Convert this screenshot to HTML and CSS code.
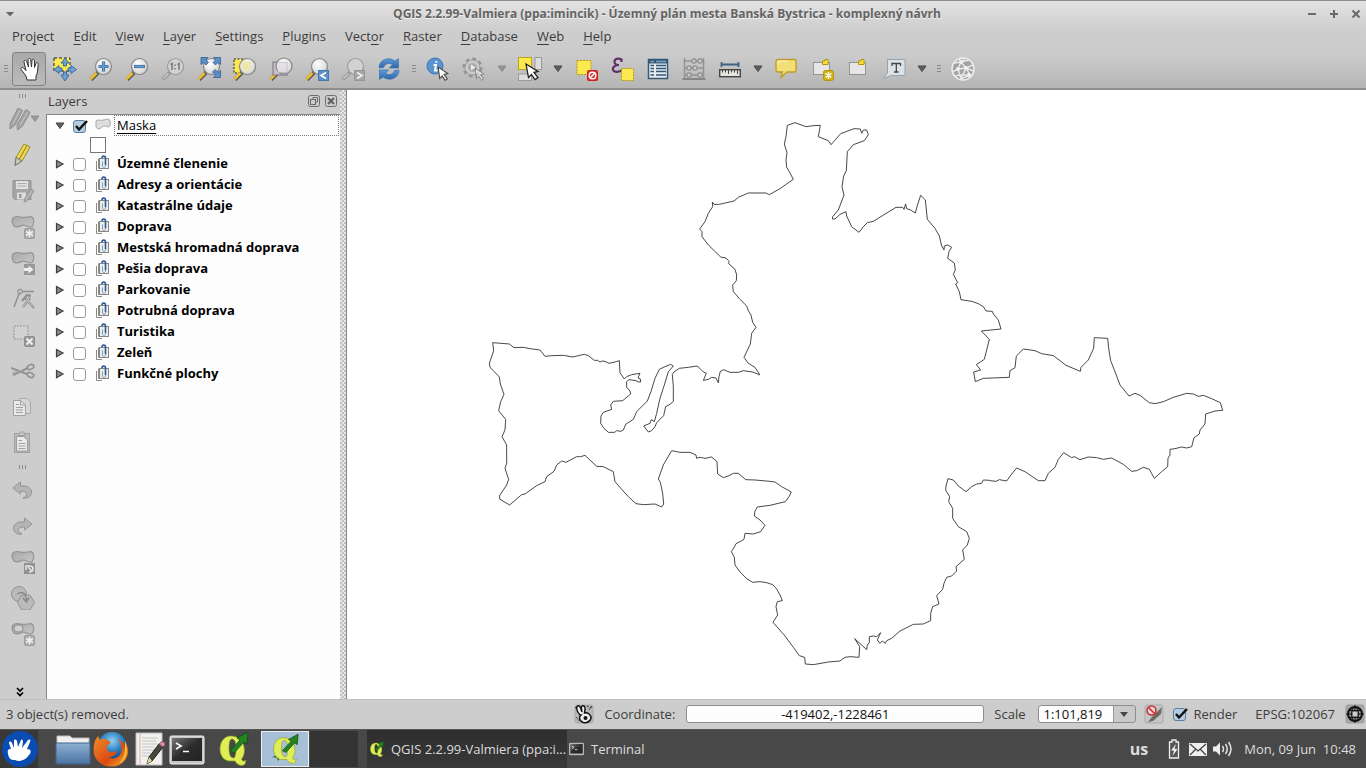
FILE: index.html
```html
<!DOCTYPE html>
<html lang="en">
<head>
<meta charset="utf-8">
<title>QGIS 2.2.99-Valmiera (ppa:imincik) - Územný plán mesta Banská Bystrica - komplexný návrh</title>
<link rel="stylesheet" href="styles.css">
</head>
<body>
<svg class="defs" aria-hidden="true">
  <defs>
    <linearGradient id="g-blue" x1="0" y1="0" x2="0" y2="1"><stop offset="0" stop-color="#5f9bd8"/><stop offset="1" stop-color="#2f66a8"/></linearGradient>
    <linearGradient id="g-grey" x1="0" y1="0" x2="1" y2="1"><stop offset="0" stop-color="#a8a8a8"/><stop offset="1" stop-color="#c6c6c6"/></linearGradient>
    <radialGradient id="g-lens" cx=".4" cy=".35" r=".7"><stop offset="0" stop-color="#fff"/><stop offset="1" stop-color="#cfd1d0"/></radialGradient>
    <linearGradient id="g-folder" x1="0" y1="0" x2="0" y2="1"><stop offset="0" stop-color="#8fb0d2"/><stop offset="1" stop-color="#4a72a2"/></linearGradient>
    <linearGradient id="g-term" x1="0" y1="0" x2="1" y2="1"><stop offset="0" stop-color="#777"/><stop offset=".5" stop-color="#2c2c2c"/><stop offset="1" stop-color="#222"/></linearGradient>
    <radialGradient id="g-globe" cx=".5" cy=".3" r=".7"><stop offset="0" stop-color="#8fd0f4"/><stop offset=".5" stop-color="#2c7fc0"/><stop offset="1" stop-color="#0c3570"/></radialGradient>
    <linearGradient id="g-fox" x1="0" y1="0" x2="1" y2="1"><stop offset="0" stop-color="#f08c2a"/><stop offset=".6" stop-color="#dc4a12"/><stop offset="1" stop-color="#f8b830"/></linearGradient>
  </defs>
  <symbol id="lens" viewBox="0 0 24 24">
    <path d="M2 22.500L9 15.500" stroke="#555" stroke-width="4"/><path d="M1.500 22L7.500 16" stroke="#f2c132" stroke-width="2.600"/>
    <circle cx="14.500" cy="9.500" r="8" fill="url(#g-lens)" stroke="#858585" stroke-width="1.200"/>
  </symbol>
  <symbol id="lens-grey" viewBox="0 0 24 24">
    <path d="M1.500 22.500L9 15.500" stroke="#959595" stroke-width="3.600"/><path d="M2 22L7.500 16.700" stroke="#c6c6c6" stroke-width="1.600"/>
    <circle cx="14.500" cy="9.500" r="8" fill="#d2d2d2" stroke="#9a9a9a" stroke-width="1.200"/>
  </symbol>
  <symbol id="cursor" viewBox="0 0 12 14"><path d="M1 1L10 7L6.500 7.800L9.500 12L7.500 13.400L4.800 9.200L2.500 11.800Z" fill="#fff" stroke="#444" stroke-width="1"/></symbol>
  <symbol id="blob" viewBox="0 0 24 14"><path d="M2 3C5 0 9 2 12 2.500C16 2.500 19 1 21 2C24 4 22.500 10 21 11.500C18 13.500 15 10 12 10C9 11 6 13.500 3 11C1 9 .5 5 2 3Z" fill="url(#g-grey)" stroke="#929292" stroke-width="1.200"/></symbol>
  <symbol id="star" viewBox="0 0 11 11"><rect x=".5" y=".5" width="10" height="10" rx="1.500" fill="#adadad" stroke="#9b9b9b"/><path d="M5.500 1.500V9.500M2 3.500L9 7.500M9 3.500L2 7.500" stroke="#f0f0f0" stroke-width="1.500"/></symbol>
  <symbol id="group" viewBox="0 0 16 17"><path d="M1.500 6V15.500H7M3.500 3.500V13.500H10" fill="none" stroke="#8b8b84"/><rect x="4.500" y="3.500" width="9" height="10" fill="#eceeec" stroke="#868681"/><path d="M10.500 4V11C10.500 13 7.500 13 7.500 11V6.500" fill="none" stroke="#8199bf"/><path d="M7 3C7 .5 10.500 .5 10.500 3V10" fill="none" stroke="#2e5b9a" stroke-width="1.600"/></symbol>
  <symbol id="right" viewBox="0 0 10 10"><path d="M1.500 1.500V8.800L8 5.100Z" fill="#8b8b8b" stroke="#404040" stroke-width="1.200"/></symbol>
  <symbol id="down" viewBox="0 0 10 10"><path d="M1 2H9L5 7.500Z" fill="#5e5e5e" stroke="#484848"/></symbol>
  <symbol id="qlogo" viewBox="0 0 32 34">
    <path d="M1 26L7 27L8 31L10 27L12 25L8 24Z" fill="#145c14"/>
    <path fill-rule="evenodd" d="M14 4C7 4 3 10 3 17C3 24 7 29 13 29L18 29C20 33 25 35 28 32L29 28C27 30 25 29 24.500 27C27 24 28 20 27 15C26 8 20 4 14 4ZM15 7C18 7 19 11 19 17C19 21 18.500 25 17 26C13 26 12 22 12 16C12 10 13 7 15 7Z" fill="#dfee55" stroke="#8b9c2a" stroke-width=".7"/>
    <path d="M13 19L23 8L20 6L31 0L30 12L27 10L17 21Z" fill="#238420" stroke="#0e4d10" stroke-width=".8"/>
  </symbol>
  <symbol id="terminal" viewBox="0 0 36 30"><rect x="1" y="1" width="34" height="28" rx="1.500" fill="#c6c6c4" stroke="#f0f0f0"/><rect x="3" y="3" width="30" height="23" fill="url(#g-term)"/><path d="M7 8L12 11L7 14M14 16.500H20" fill="none" stroke="#fff" stroke-width="1.700"/></symbol>
</svg>

<div class="app">
  <header class="chrome">
    <div class="titlebar">
      <svg class="i10" viewBox="0 0 10 10"><path d="M1 3H9L5 7.500Z" fill="#666"/></svg>
      <h1>QGIS 2.2.99-Valmiera (ppa:imincik) - Územný plán mesta Banská Bystrica - komplexný návrh</h1>
      <div class="wincontrols">
        <button aria-label="Minimize"><svg viewBox="0 0 10 10"><path d="M1 5H9" stroke="#6a6a6a" stroke-width="2"/></svg></button>
        <button aria-label="Maximize"><svg viewBox="0 0 10 10"><path d="M1 5H9M5 1V9" stroke="#6a6a6a" stroke-width="2"/></svg></button>
        <button aria-label="Close"><svg viewBox="0 0 10 10"><path d="M1.500 1.500L8.500 8.500M8.500 1.500L1.500 8.500" stroke="#6a6a6a" stroke-width="2"/></svg></button>
      </div>
    </div>
    <nav class="menubar">
      <button>Pro<u>j</u>ect</button><button><u>E</u>dit</button><button><u>V</u>iew</button><button><u>L</u>ayer</button><button><u>S</u>ettings</button><button><u>P</u>lugins</button><button>Vect<u>o</u>r</button><button><u>R</u>aster</button><button><u>D</u>atabase</button><button><u>W</u>eb</button><button><u>H</u>elp</button>
    </nav>
    <div class="toolbar">
      <span class="grip first"></span>
      <button class="tool pressed" aria-label="Pan Map"><svg viewBox="0 0 24 24"><path d="M10 23L9 19L4.500 13C3 11 5 9.500 6.500 11L9 13.500L7 5C6.700 3 9 2.500 9.700 4.500L11.500 10L11 3C11 1 13.500 1 13.700 3L14.500 10L15 3.500C15.200 1.700 17.500 2 17.500 4L17.500 10.500L19 6.500C19.700 5 21.500 5.500 21.200 7.500L20.300 16L19 19V23Z" fill="#fff" stroke="#333"/></svg></button>
      <button class="tool" aria-label="Pan Map to Selection"><svg viewBox="0 0 24 24"><rect x="1" y="1" width="16" height="13" fill="#fce94f" stroke="#222" stroke-dasharray="3 2"/><g fill="#6f9fd4" stroke="#34679f" stroke-width=".9"><path d="M12 1L16 6H13.500V9H10.500V6H8Z"/><path d="M12 24L16 18H13.500V15H10.500V18H8Z"/><path d="M1 12.500L6 8.500V11H9V14H6V16.500Z"/><path d="M23.500 12.500L18 8.500V11H15V14H18V16.500Z"/></g></svg></button>
      <button class="tool" aria-label="Zoom In"><svg viewBox="0 0 24 24"><use href="#lens"/><path d="M14.500 4.500V14.500M9.500 9.500H19.500" stroke="#3b6c9f" stroke-width="3.200"/><path d="M14.500 5V14M10 9.500H19" stroke="#6d9fd0" stroke-width="1.600"/></svg></button>
      <button class="tool" aria-label="Zoom Out"><svg viewBox="0 0 24 24"><use href="#lens"/><path d="M9 9.500H20" stroke="#3b6c9f" stroke-width="3.200"/><path d="M9.500 9.500H19.500" stroke="#6d9fd0" stroke-width="1.600"/></svg></button>
      <button class="tool" aria-label="Zoom to Native Resolution"><svg viewBox="0 0 24 24"><use href="#lens-grey"/><path d="M9.500 7.500L11 6.500V13M16.500 7.500L18 6.500V13M14 7.500V9M14 11V12.500" fill="none" stroke="#777" stroke-width="1.500"/></svg></button>
      <button class="tool" aria-label="Zoom Full"><svg viewBox="0 0 24 24"><use href="#lens"/><g fill="#5b8fc8" stroke="#345f8f" stroke-width=".8"><path d="M4 .5H11L9 3L11.500 5.500L9 8L6.500 5.500L4 7.500Z"/><path d="M23.500 .5H16.500L18.500 3L16 5.500L18.500 8L21 5.500L23.500 7.500Z"/><path d="M23.500 20.500H16.500L18.500 18L15.500 15L18 12.500L21 15.500L23.500 13.500Z"/></g></svg></button>
      <button class="tool" aria-label="Zoom to Selection"><svg viewBox="0 0 24 24"><rect x="1" y="2" width="12" height="14" fill="#fce94f" stroke="#222" stroke-dasharray="2 1.500"/><use href="#lens"/><rect x="9" y="4.500" width="9" height="9" fill="#efe6aa"/></svg></button>
      <button class="tool" aria-label="Zoom to Layer"><svg viewBox="0 0 24 24"><path d="M2 22.500L9 15.500" stroke="#555" stroke-width="4"/><path d="M1.500 22L7.500 16" stroke="#f2c132" stroke-width="2.600"/><rect x="4" y="5" width="14" height="13" fill="#c6bfc8" stroke="#806f84"/><circle cx="15" cy="9" r="8" fill="url(#g-lens)" stroke="#858585" stroke-width="1.200"/><path d="M8 5.500H18V15.500H9" fill="#dfd9df" stroke="#bbb2bd" opacity=".7"/></svg></button>
      <button class="tool" aria-label="Zoom Last"><svg viewBox="0 0 24 24"><use href="#lens"/><rect x="13.500" y="13.500" width="10" height="10" fill="#5b90c8" stroke="#4278b0"/><path d="M21 15.500L16 18.500L21 21.500" fill="none" stroke="#fff" stroke-width="1.800"/></svg></button>
      <button class="tool" aria-label="Zoom Next"><svg viewBox="0 0 24 24"><use href="#lens-grey"/><rect x="13.500" y="13.500" width="10" height="10" fill="#a5a5a5" stroke="#979797"/><path d="M16 15.500L21 18.500L16 21.500" fill="none" stroke="#eee" stroke-width="1.800"/></svg></button>
      <button class="tool" aria-label="Refresh"><svg viewBox="0 0 24 24"><g fill="url(#g-blue)" stroke="#3a72b0" stroke-width=".7"><path d="M2 11C2 3 11 -1 18 4L21.500 1.500V11H12.500L15.500 7.500C11 5 8 7 6.500 10.500Z"/><path d="M22 13C22 21 13 25 6 20L2.500 22.500V13H11.500L8.500 16.500C13 19 16 17 17.500 13.500Z"/></g></svg></button>
      <span class="grip"></span>
      <button class="tool" aria-label="Identify Features"><svg viewBox="0 0 24 24"><circle cx="9" cy="9" r="8" fill="#5a93d0" stroke="#3f77b4"/><path d="M10.300 4V5.800M7.500 8H10L9 13.500H11.500" fill="none" stroke="#fff" stroke-width="2"/><use href="#cursor" x="11" y="9" width="13" height="15"/></svg></button>
      <button class="tool" aria-label="Run Feature Action"><svg viewBox="0 0 24 24"><circle cx="10.500" cy="10.500" r="8.500" fill="#c9c9c9" stroke="#959595" stroke-width="3" stroke-dasharray="3.700 2.900"/><circle cx="10.500" cy="10.500" r="7.500" fill="#ccc" stroke="#999"/><circle cx="10.500" cy="10.500" r="4.500" fill="#aaa"/><path d="M9 7.500V13.500L13.500 10.500Z" fill="#eee"/><g opacity=".45"><use href="#cursor" x="12" y="10" width="12" height="14"/></g></svg></button>
      <button class="drop faded" aria-label="Action options"><svg viewBox="0 0 10 10"><use href="#down"/></svg></button>
      <button class="tool" aria-label="Select Features"><svg viewBox="0 0 24 24"><rect x="17" y=".5" width="6.500" height="12" fill="#ddd" stroke="#999"/><rect x=".5" y="17" width="13" height="6.500" fill="#ddd" stroke="#999"/><rect x=".5" y=".5" width="13" height="12" fill="#fce94f" stroke="#bda413"/><path d="M8 7L20 14.500L16 15.500L20 20.500L17 22.500L13.500 17.500L10.500 20.500Z" fill="#fff" stroke="#222" stroke-width="1.300"/></svg></button>
      <button class="drop" aria-label="Selection options"><svg viewBox="0 0 10 10"><use href="#down"/></svg></button>
      <button class="tool" aria-label="Deselect Features"><svg viewBox="0 0 24 24"><rect x="3" y="3.500" width="14" height="14" fill="#fce94f" stroke="#b79c13" stroke-dasharray="2 1"/><rect x="13.500" y="13.500" width="10" height="10" rx="1" fill="#dc3030" stroke="#c51f22"/><circle cx="18.500" cy="18.500" r="3.300" fill="none" stroke="#fff" stroke-width="1.400"/><path d="M16.500 20.500L20.500 16.500" stroke="#fff" stroke-width="1.400"/></svg></button>
      <button class="tool" aria-label="Select by Expression"><svg viewBox="0 0 24 24"><path d="M11.500 5V2.500C8 .5 4 2 4.500 5C4.700 7 7 8 9 8C5 8 2.500 10 3 12.500C4 16 10 15.500 12.500 12.500" fill="none" stroke="#5e2f69" stroke-width="2.200"/><rect x="11.500" y="11.500" width="12" height="12" fill="#fce94f" stroke="#b79c13" stroke-dasharray="2 1"/></svg></button>
      <button class="tool" aria-label="Attribute Table"><svg viewBox="0 0 24 24"><rect x="2.500" y="2.500" width="19" height="19" fill="#e7ebed" stroke="#355872" stroke-width="1.500"/><path d="M2 4.500H22" stroke="#355872" stroke-width="4"/><path d="M4.500 4.500H8M10 4.500H20" stroke="#75a2c8" stroke-width="1.600"/><path d="M4.500 8.500H8M10 8.500H20M4.500 11.500H8M10 11.500H20M4.500 14.500H8M10 14.500H20M4.500 18H8M10 18H20" stroke="#2c5879" stroke-width="1.300"/></svg></button>
      <button class="tool" aria-label="Field Calculator"><svg viewBox="0 0 24 24"><g fill="none" stroke="#939393"><path d="M2.500 1V22M21.500 1V22M2 4H22M2 11H22M2 18H22" stroke-width="1.500"/><path d="M.5 22H23.500" stroke="#858585" stroke-width="2"/></g><g fill="#ccc" stroke="#8c8c8c" stroke-width="1.200"><circle cx="12" cy="4" r="2.200"/><circle cx="18" cy="4" r="2.200"/><circle cx="7" cy="11" r="2.200"/><circle cx="13" cy="11" r="2.200"/><circle cx="7" cy="18" r="2.200"/><circle cx="18" cy="18" r="2.200"/></g></svg></button>
      <button class="tool" aria-label="Measure Line"><svg viewBox="0 0 24 24"><path d="M3.500 7.500H20.500M3.500 5V10M20.500 5V10" stroke="#3f6382" stroke-width="1.800"/><rect x="1.700" y="12.700" width="20.600" height="7" fill="#e4e5dc" stroke="#44463f" stroke-width="1.400"/><path d="M4.500 13V15.500M7.500 13V15.500M10.500 13V17M13.500 13V15.500M16.500 13V15.500M19.500 13V17" stroke="#444"/></svg></button>
      <button class="drop" aria-label="Measure options"><svg viewBox="0 0 10 10"><use href="#down"/></svg></button>
      <button class="tool" aria-label="Map Tips"><svg viewBox="0 0 24 24"><path d="M4 2.500H20Q22 2.500 22 4.500V13Q22 15 20 15H13L7 20.500L8.500 15H4Q2 15 2 13V4.500Q2 2.500 4 2.500Z" fill="#f1df77" stroke="#bf9c20" stroke-width="1.300"/><path d="M4 8V5Q4 4 6 4H14" fill="none" stroke="#fff" opacity=".7"/></svg></button>
      <button class="tool" aria-label="New Bookmark"><svg viewBox="0 0 24 24"><rect x="3.500" y="5.500" width="16" height="12" fill="#e6e6e6" stroke="#555" stroke-dasharray="1 1"/><path d="M12.500 6V4H15V2.500H18V7.500H12.500Z" fill="#f8df3e" stroke="#b59607"/><rect x="13.500" y="13.500" width="10" height="10" rx="2" fill="#d4b018" stroke="#b59607"/><path d="M18.500 15V22M15.500 16.500L21.500 20.500M21.500 16.500L15.500 20.500" stroke="#fff" stroke-width="1.400"/></svg></button>
      <button class="tool" aria-label="Show Bookmarks"><svg viewBox="0 0 24 24"><rect x="3.500" y="5.500" width="16" height="12" fill="#e6e6e6" stroke="#555" stroke-dasharray="1 1"/><path d="M12.500 6V4H15V2.500H18V7.500H12.500Z" fill="#f8df3e" stroke="#b59607"/></svg></button>
      <button class="tool" aria-label="Text Annotation"><svg viewBox="0 0 24 24"><path d="M5.500 2.500H23V18.500H9L1.500 21.500L5.500 16Z" fill="#dbe3e9" stroke="#93a3b0"/><path d="M10 9V6.500H18.500V9M14.300 6.500V15M12 15H16.500" fill="none" stroke="#454545" stroke-width="1.300"/></svg></button>
      <button class="drop" aria-label="Annotation options"><svg viewBox="0 0 10 10"><use href="#down"/></svg></button>
      <span class="grip"></span>
      <button class="tool" aria-label="MetaSearch"><svg viewBox="0 0 24 24"><circle cx="12" cy="12" r="11" fill="#a3a3a3" stroke="#eee" stroke-width="1.500"/><g fill="none" stroke="#e9e9e9" stroke-width="1.500"><path d="M3 6L10 5L18 3M10 5L7 12L1.500 15M7 12L15 11L22 8M15 11L19 18L10 22L7 12M10 5L15 11L22.500 14M15 11L10 22M4 19L9 18L19 18M8 1L10 5L13 2"/></g><g fill="#f0f0f0"><circle cx="10" cy="5" r="2"/><circle cx="7" cy="12" r="2"/><circle cx="15" cy="11" r="2"/><circle cx="18" cy="18" r="2"/></g></svg></button>
    </div>
  </header>

  <main class="work">
    <div class="sidebar">
      <span class="grip wide"></span>
      <div class="pair"><button class="tool" aria-label="Current Edits"><svg viewBox="0 0 24 24"><g fill="#a5a5a5" stroke="#8d8d8d"><path d="M11 1L15.500 3.500L8 18L3 22L3 16.500Z"/><path d="M19 2.500L23 5.500L15.500 19L10.500 23L10 17.500Z"/></g><path d="M13 3L6 17M21 5L13 18" stroke="#c4c4c4"/></svg></button><button class="drop faded" aria-label="Edit options"><svg viewBox="0 0 10 10"><use href="#down"/></svg></button></div>
      <button class="tool" aria-label="Toggle Editing"><svg viewBox="0 0 24 24"><path d="M13 1L19 4L11 18L4 22.500L5 14.500Z" fill="#eedb55" stroke="#9a852e"/><path d="M16 2.500L8 16.500" stroke="#a98d1d" stroke-width="1.300"/><path d="M5 14.500L11 18L4 22.500Z" fill="#c8c6ba" stroke="#77766e"/></svg></button>
      <button class="tool" aria-label="Save Edits"><svg viewBox="0 0 24 24"><path d="M2 1.500H20V20.500H4L2 18.500Z" fill="#a5a5a5" stroke="#929292"/><rect x="5" y="2" width="12" height="8" fill="#e0e0e0"/><path d="M6.500 4.500H15.500M6.500 7H15.500" stroke="#aaa"/><rect x="6" y="13.500" width="9" height="7" fill="#ddd"/><rect x="8" y="15" width="2.500" height="4" fill="#999"/><path d="M20 10L23 12L16 22L13 23L14 19Z" fill="#b3b3b3" stroke="#939393"/></svg></button>
      <button class="tool" aria-label="Add Feature"><svg viewBox="0 0 24 24"><use href="#blob" width="24" height="14"/><use href="#star" x="13" y="13" width="11" height="11"/></svg></button>
      <button class="tool" aria-label="Move Feature"><svg viewBox="0 0 24 24"><use href="#blob" width="24" height="14"/><rect x="13" y="13" width="11" height="11" fill="#999"/><path d="M13 17H17.500V14.500L22.500 18.500L17.500 22.500V20H13Z" fill="#eee"/></svg></button>
      <button class="tool" aria-label="Node Tool"><svg viewBox="0 0 24 24"><path d="M3 20L9 4.500H23" fill="none" stroke="#8f8f8f" stroke-width="1.400"/><circle cx="9" cy="4.500" r="2.500" fill="#bbb" stroke="#8f8f8f"/><path d="M12 20L19 11M14 11L23 21M11 14L16 8L20 9" fill="none" stroke="#929292" stroke-width="2.400"/><path d="M12 20L18 12M15 12L22 20" stroke="#c9c9c9"/></svg></button>
      <button class="tool" aria-label="Delete Selected"><svg viewBox="0 0 24 24"><rect x="3" y="3" width="14" height="13" fill="#d2d2d2" stroke="#959595" stroke-dasharray="2 1"/><rect x="13.500" y="13.500" width="10" height="10" rx="1" fill="#999" stroke="#8f8f8f"/><path d="M15.500 15.500L21.500 21.500M21.500 15.500L15.500 21.500" stroke="#f0f0f0" stroke-width="2"/></svg></button>
      <button class="tool" aria-label="Cut Features"><svg viewBox="0 0 24 24"><path d="M0 9L16 15M2 16L17 9" stroke="#939393" stroke-width="2"/><path d="M1 14L12 11" stroke="#aaa"/><g fill="none" stroke="#919191" stroke-width="1.700"><ellipse cx="19.500" cy="8" rx="3.500" ry="2.300" transform="rotate(-25 19.500 8)"/><ellipse cx="19.500" cy="16" rx="3.500" ry="2.300" transform="rotate(25 19.500 16)"/></g></svg></button>
      <button class="tool" aria-label="Copy Features"><svg viewBox="0 0 24 24"><path d="M8.500 3.500H16L19.500 7V18.500H8.500Z" fill="#d6d6d6" stroke="#aaa"/><path d="M2.500 5.500H9.500L14.500 10V20.500H2.500Z" fill="#e8e8e8" stroke="#a2a2a2"/><path d="M9.500 5.500V10H14.500M5 9.500H8M5 12.500H12M5 15H12M5 17.500H12" fill="none" stroke="#9f9f9f"/></svg></button>
      <button class="tool" aria-label="Paste Features"><svg viewBox="0 0 24 24"><rect x="3.500" y="2.500" width="15" height="19" fill="#bababa" stroke="#a0a0a0"/><path d="M5.500 5.500H12.500L16.500 9V20H5.500Z" fill="#e9e9e9" stroke="#9c9c9c"/><path d="M8 2.500Q11 -1 14 2.500V4.500H8Z" fill="#c5c5c5" stroke="#9c9c9c"/><path d="M7.500 9.500H11M7.500 12.500H14.500M7.500 15H14.500M7.500 17.500H14.500" stroke="#a2a2a2"/></svg></button>
      <span class="grip wide"></span>
      <button class="tool" aria-label="Undo"><svg viewBox="0 0 24 24"><path d="M2 10L9.500 4V8C17 7 20.500 11 20.500 14C20.500 18 17 21 12 20C15 19 17 16 14.500 14C13 13 11.500 13 9.500 13V16Z" fill="#b5b5b5" stroke="#939393"/></svg></button>
      <button class="tool" aria-label="Redo"><svg viewBox="0 0 24 24"><path d="M21 10L13.500 4V8C6 7 2.500 11 2.500 14C2.500 18 6 21 11 20C8 19 6 16 8.500 14C10 13 11.500 13 13.500 13V16Z" fill="#b5b5b5" stroke="#939393"/></svg></button>
      <button class="tool" aria-label="Rotate Feature"><svg viewBox="0 0 24 24"><use href="#blob" width="24" height="14"/><rect x="13" y="13" width="11" height="11" fill="#909090"/><path d="M15 20V16H19Q22 16 22 19Q22 22 18 22M17 17L21 21" fill="none" stroke="#e5e5e5" stroke-width="1.500"/></svg></button>
      <button class="tool" aria-label="Simplify Feature"><svg viewBox="0 0 24 24"><g fill="#bababa" stroke="#929292"><circle cx="8" cy="8" r="7.500"/><path d="M10.500 9H19L23.500 16.500L19 24H10.500L6.500 16.500Z"/></g><path d="M6 8Q14 3 15.500 14M12 12L15.500 16L18 11.500" fill="none" stroke="#858585" stroke-width="1.400"/></svg></button>
      <button class="tool" aria-label="Add Ring"><svg viewBox="0 0 24 24"><use href="#blob" width="24" height="14"/><ellipse cx="7.500" cy="6.500" rx="4.500" ry="3.500" fill="#d0d0d0" stroke="#8c8c8c"/><use href="#star" x="13" y="13" width="11" height="11"/></svg></button>
      <button class="more" aria-label="More tools"><svg viewBox="0 0 10 10"><path d="M2 1L5 4L8 1M2 5.500L5 8.500L8 5.500" fill="none" stroke="#000" stroke-width="1.700"/></svg></button>
    </div>

    <section class="layers">
      <div class="panelhead">
        <h2>Layers</h2>
        <button aria-label="Float"><svg viewBox="0 0 12 12"><rect x=".5" y=".5" width="11" height="11" rx="2" fill="none" stroke="#6c6c6c"/><path d="M5 4.500V2.500H9.500V7H7.500" fill="none" stroke="#6c6c6c"/><rect x="2.500" y="4.500" width="5" height="5" fill="none" stroke="#6c6c6c"/></svg></button>
        <button aria-label="Close panel"><svg viewBox="0 0 12 12"><rect x=".5" y=".5" width="11" height="11" rx="2" fill="none" stroke="#6c6c6c"/><path d="M3 3L9 9M9 3L3 9" stroke="#5e5e5e" stroke-width="2"/></svg></button>
      </div>
      <ul class="tree">
        <li class="row"><button aria-label="Collapse"><svg viewBox="0 0 10 10"><use href="#down"/></svg></button><input type="checkbox" id="l0" checked><svg class="kind" viewBox="0 0 16 17"><path d="M1 4C3 2 6 4 9 3C12 2 14 1 15 4C16 7 15 10 13 10C10 8 8 9 6 11C3 13 1 11 1 9Z" fill="#ddd" stroke="#a5a5a5"/></svg><label for="l0" class="current"><u>Maska</u></label></li>
        <li class="symbol"><span></span></li>
        <li class="row"><button aria-label="Expand"><svg viewBox="0 0 10 10"><use href="#right"/></svg></button><input type="checkbox" id="l1"><svg class="kind"><use href="#group"/></svg><label for="l1">Územné členenie</label></li>
        <li class="row"><button aria-label="Expand"><svg viewBox="0 0 10 10"><use href="#right"/></svg></button><input type="checkbox" id="l2"><svg class="kind"><use href="#group"/></svg><label for="l2">Adresy a orientácie</label></li>
        <li class="row"><button aria-label="Expand"><svg viewBox="0 0 10 10"><use href="#right"/></svg></button><input type="checkbox" id="l3"><svg class="kind"><use href="#group"/></svg><label for="l3">Katastrálne údaje</label></li>
        <li class="row"><button aria-label="Expand"><svg viewBox="0 0 10 10"><use href="#right"/></svg></button><input type="checkbox" id="l4"><svg class="kind"><use href="#group"/></svg><label for="l4">Doprava</label></li>
        <li class="row"><button aria-label="Expand"><svg viewBox="0 0 10 10"><use href="#right"/></svg></button><input type="checkbox" id="l5"><svg class="kind"><use href="#group"/></svg><label for="l5">Mestská hromadná doprava</label></li>
        <li class="row"><button aria-label="Expand"><svg viewBox="0 0 10 10"><use href="#right"/></svg></button><input type="checkbox" id="l6"><svg class="kind"><use href="#group"/></svg><label for="l6">Pešia doprava</label></li>
        <li class="row"><button aria-label="Expand"><svg viewBox="0 0 10 10"><use href="#right"/></svg></button><input type="checkbox" id="l7"><svg class="kind"><use href="#group"/></svg><label for="l7">Parkovanie</label></li>
        <li class="row"><button aria-label="Expand"><svg viewBox="0 0 10 10"><use href="#right"/></svg></button><input type="checkbox" id="l8"><svg class="kind"><use href="#group"/></svg><label for="l8">Potrubná doprava</label></li>
        <li class="row"><button aria-label="Expand"><svg viewBox="0 0 10 10"><use href="#right"/></svg></button><input type="checkbox" id="l9"><svg class="kind"><use href="#group"/></svg><label for="l9">Turistika</label></li>
        <li class="row"><button aria-label="Expand"><svg viewBox="0 0 10 10"><use href="#right"/></svg></button><input type="checkbox" id="l10"><svg class="kind"><use href="#group"/></svg><label for="l10">Zeleň</label></li>
        <li class="row"><button aria-label="Expand"><svg viewBox="0 0 10 10"><use href="#right"/></svg></button><input type="checkbox" id="l11"><svg class="kind"><use href="#group"/></svg><label for="l11">Funkčné plochy</label></li>
      </ul>
    </section>
    <div class="splitter"></div>

    <section class="map" aria-label="Map canvas">
      <svg viewBox="347 90 1019 609">
        <g fill="none" stroke="#2b2b2b" stroke-width="2.600" stroke-linejoin="round">
          <polyline transform="translate(480 330) scale(.33333)" points="839,134 817,126 790,122 775,127 750,127 731,119 721,124 717,140 715,158 708,144 695,142 685,148 670,151 679,130 670,126 652,108 625,112 598,115 583,125 577,133 580,170 580,214 570,223 557,230 551,257 530,278 525,290 515,302 505,306 491,288 510,280 514,269 523,275 530,250 540,205 553,165 565,125 580,108 572,103 555,110 538,118 525,145 513,185 502,213 470,245 460,268 437,283 430,300 423,304 410,302 404,307 385,307 372,295 362,280 363,258 370,247 395,238 392,225 400,214 428,212 452,192 450,183 440,172 440,155 447,149 468,152 476,156 482,156 481,147 474,144 480,130 455,134 440,140 433,147 420,128 418,92 405,96 387,100 375,94 367,93 360,96 353,91 343,91 325,77 313,73 295,77 278,81 250,76 215,77 195,79 180,60 150,56 130,52 102,53 88,42 38,38 41,62 28,100 30,112 44,126 58,141 61,162 72,193 62,215 56,242 77,268 75,300 66,320 80,345 80,375 80,400 75,415 86,448 80,465 58,498 60,508 89,525 125,494 135,492 170,467 195,455 200,440 222,424 230,405 245,393 258,397 290,380 302,380 315,376 350,409 370,410 400,425 405,455 425,478 445,500 468,521 490,524 525,522 545,531 551,522 548,490 541,457 535,447 550,405 575,362 600,367 630,367 648,375 650,385 660,382 675,385 695,381 711,395 713,432 730,443 745,438 760,430 775,430 797,449 825,450 870,454"/>
          <polyline transform="translate(720 470) scale(.33333)" points="150,34 165,36 185,50 214,66 207,80 196,95 150,106 112,111 105,123 103,138 120,150 135,166 122,185 100,192 75,190 72,208 60,215 48,221 45,228 34,245 43,262 45,285 60,306 80,326 98,337 120,335 140,338 158,344 170,357 180,375 187,392 172,395 168,410 173,435 159,457 195,498 220,532 238,557 254,562 256,582 280,584 325,576 360,573 375,562 390,560 417,562 419,530 404,506 440,539 442,525 448,518 448,500 460,498 470,500 482,488 472,510 480,520 487,513 496,520 500,512 515,505 540,483 580,463 610,462 632,452 632,430 638,410 657,402 650,377 668,358 672,340 680,322 695,318 710,303 708,290 733,268 728,240 742,225 748,205 740,185 715,170 698,145 698,115 686,95 689,80 677,60 678,48 684,26 700,30 715,48 738,65 755,50 770,42 785,40 790,30 810,31"/>
          <polyline transform="translate(940 320) scale(.33333)" points="150,482 168,484 178,479 200,483 215,462 230,444 255,455 295,482 315,482 325,460 345,442 355,418 371,398 395,413 403,410 420,419 445,411 470,413 490,418 515,414 550,433 575,454 590,452 610,442 628,448 643,475 665,455 683,440 684,415 690,405 690,388 705,386 725,381 740,384 755,380 762,353 778,342 780,330 795,312 797,282 825,273 848,271 841,248 815,236 790,226 775,229 760,222 740,220 700,232 670,245 645,251 628,248 600,226 585,220 567,228 540,195 525,155 512,122 506,85 503,55 463,53 461,85 445,120 423,142 421,154 378,136 360,122 340,107 305,101 285,92 250,87 229,108 225,143 210,152 208,172 130,175 106,185 101,156 122,150 109,134 133,118 148,58 124,33 183,27 175,0"/>
          <polyline transform="translate(680 110) scale(.33333)" points="955,630 940,612 937,604 918,603 910,590 895,581 875,574 843,569 838,545 827,522 833,518 820,493 826,480 823,459 803,445 807,425 815,412 803,405 793,408 792,420 785,408 778,378 765,355 742,328 736,270 722,256 714,280 706,309 690,299 680,296 677,282 672,298 668,292 648,292 580,334 562,338 550,350 537,367 515,350 500,318 498,305 480,313 465,327 457,327 458,320 475,300 492,255 486,230 491,198 499,182 502,125 520,104 553,92 565,74 560,60 550,60 545,70 541,57 522,56 482,71 453,104 445,92 415,80 421,46 400,47 378,50 345,38 322,46 318,80 313,102 321,128 318,150 320,172 328,185 340,208 320,222 300,236 268,254 258,249 205,249 175,262 162,273 118,283 102,283 97,276 98,290 85,310 75,335 59,357 66,365 66,380 85,405 122,441 138,444 148,455 145,460 165,478 170,495 169,512 158,525 160,545 180,568 200,588 205,602 213,615 218,637 228,652 215,670 211,702 192,742 205,760 225,772 239,793 236,796"/>
        </g>
      </svg>
    </section>
  </main>

  <footer class="status">
    <span class="message">3 object(s) removed.</span>
    <button class="mini" aria-label="Toggle extents"><svg viewBox="0 0 20 20"><rect x="1" y="1" width="18" height="18" rx="2" fill="#b9b9b9" stroke="#aaa"/><path d="M1 3L5 8M2 13L6 18M13 2L18 4M15 6L18 2" stroke="#333" stroke-dasharray="2 1"/><path d="M6 11C2 7 2 2 4 2C6 1 7 5 8 8C7 4 7 1 10 2C12 3 11 5 10.500 9C14 8 17 11 17 14C16 19 9 20 7 17C5 15 5 13 7 11Z" fill="#eee" stroke="#111" stroke-width="1.500"/><circle cx="11.500" cy="14" r="2" fill="#111"/></svg></button>
    <label for="coord" class="coordlabel">Coordinate:</label>
    <input type="text" id="coord" value="-419402,-1228461">
    <label for="scale" class="scalelabel">Scale</label>
    <select id="scale"><option>1:101,819</option></select>
    <button class="mini stop" aria-label="Stop rendering"><svg viewBox="0 0 20 20"><rect x="1" y="1" width="18" height="18" rx="2" fill="#c6c6c6" stroke="#aaa"/><path d="M18 3L17 10L9 17L4 18L8 13Z" fill="#6b6b66"/><circle cx="7.500" cy="6.500" r="4.500" fill="#e9d5d5" stroke="#cc3038" stroke-width="1.600"/><path d="M4.500 3.500L10.500 9.500" stroke="#cc3038" stroke-width="1.600"/></svg></button>
    <input type="checkbox" id="render" checked><label for="render" class="renderlabel">Render</label>
    <span class="epsg">EPSG:102067</span>
    <button class="mini" aria-label="Projection"><svg viewBox="0 0 20 20"><rect x="1" y="1" width="18" height="18" rx="2" fill="#a7a7a7" stroke="#999"/><circle cx="10" cy="10" r="7" fill="#999" stroke="#111" stroke-width="2"/><ellipse cx="10" cy="10" rx="3.500" ry="7" fill="none" stroke="#111"/><path d="M1 10H19M10 1V19M4 6.500H16M4 13.500H16" stroke="#111"/><path d="M7 7H13V13H7Z" fill="#ccc" stroke="#222"/></svg></button>
  </footer>

  <div class="taskbar">
    <button class="start" aria-label="Applications"><svg viewBox="0 0 38 38"><circle cx="20" cy="19" r="18" fill="#0a4cb0"/><path d="M8 24C7 19 9 19 11 19L9 13C9 11 11 11 12 13L14 18L14 11C14 9 16 9 17 11L18 17L21 10C22 9 23 10 23 12L22 18L28 10C30 9 31 10 30 12L27 19C31 19 32 22 29 25C25 31 19 32 15 30C10 30 9 28 8 24Z" fill="#fff"/></svg></button>
    <div class="launchers">
      <button aria-label="Files"><svg viewBox="0 0 36 36"><path d="M2 8V5H15L17 7H34V16H2Z" fill="#f0f0ef" stroke="#bbb"/><path d="M1 12H35V32Q35 33 34 33H2Q1 33 1 32Z" fill="url(#g-folder)" stroke="#3e648f"/></svg></button>
      <button aria-label="Firefox"><svg viewBox="0 0 36 36"><circle cx="19" cy="16" r="15" fill="url(#g-globe)"/><path d="M2 10C3 8 4 6 5 5L7 9C10 7 12 7 14 9L18 11C17 13 15 14 13 15C15 18 14 20 17 21C20 22 21 20 24 20C23 24 19 26 16 26C20 29 26 27 28 22C30 17 27 11 25 8C30 10 32 14 32 17C33 14 32 11 31 9C38 17 36 29 26 34C16 38 4 34 1 23C0 18 1 13 2 10Z" fill="url(#g-fox)"/><path d="M32 10C36 19 34 28 26 33C30 28 32 23 32 17Z" fill="#f7bd38"/></svg></button>
      <button aria-label="Text editor"><svg viewBox="0 0 36 36"><path d="M5 2H31V34H5Z" fill="#f1f1ef" stroke="#bdbdbd"/><path d="M9 2V34" stroke="#eaa5a5"/><path d="M11 7H27M11 10H25M11 13H27M11 16H24M11 19H26M11 22H20M11 25H19" stroke="#c3c3c3"/><path d="M28 13L32 16L21 30L16 33L18 26Z" fill="#454b3c" stroke="#22251f"/><path d="M28 13L30 11Q34 10 34 14L32 16Z" fill="#dd91aa" stroke="#925065"/><path d="M18 26L21 30L16 33Z" fill="#e8d3a2"/></svg></button>
      <button aria-label="Terminal"><svg viewBox="0 0 36 36"><use href="#terminal" y="4" width="36" height="30"/></svg></button>
    </div>
    <button class="qgis" aria-label="QGIS"><svg><use href="#qlogo"/></svg></button>
    <button class="desk on" aria-label="Workspace 1"><svg><use href="#qlogo"/></svg></button>
    <button class="desk" aria-label="Workspace 2"></button>
    <button class="task active"><svg><use href="#qlogo"/></svg><span>QGIS 2.2.99-Valmiera (ppa:i...</span></button>
    <button class="task"><svg><use href="#terminal"/></svg><span>Terminal</span></button>
    <div class="tray">
      <b>us</b>
      <svg class="batt" viewBox="0 0 12 20"><path d="M4 3V1H8V3H10.500V19H1.500V3Z" fill="#555" stroke="#f0f0f0" stroke-width="1.300"/><path d="M8 5L3 11.500H6L4.500 17L9.500 10H6.500Z" fill="#f4f4f4"/></svg>
      <svg class="mail" viewBox="0 0 18 13"><rect width="18" height="13" fill="#eee"/><path d="M1 1L9 8L17 1M1 12L6.500 6.500M17 12L11.500 6.500" fill="none" stroke="#444" stroke-width="1.300"/></svg>
      <svg class="vol" viewBox="0 0 20 16"><path d="M0 5.500H3L7 1.500V14.500L3 10.500H0Z" fill="#eee"/><path d="M9.500 5Q11.500 8 9.500 11M12.500 3Q16 8 12.500 13M15.500 1Q20.500 8 15.500 15" fill="none" stroke="#e3e3e3" stroke-width="1.500"/></svg>
      <time>Mon, 09 Jun&nbsp; 10:48</time>
    </div>
  </div>
</div>
</body>
</html>
```

FILE: styles.css
```css
* { box-sizing: border-box; }
body { margin: 0; background: #cdcdcd; color: #3c3c3c; font: 13px/18px "Open Sans", "Noto Sans", sans-serif; }
button, input, select { font: inherit; color: inherit; margin: 0; }
button { display: inline-flex; align-items: center; justify-content: center; padding: 0; border: 0; background: none; }
svg { display: block; flex: none; }
h1, h2, ul { margin: 0; padding: 0; font-size: 13px; }
u { text-decoration: underline; text-underline-offset: 3px; text-decoration-thickness: 1px; text-decoration-skip-ink: none; }
.defs { position: absolute; width: 0; height: 0; }
.app { display: flex; flex-direction: column; height: 100vh; overflow: hidden; }

.chrome { flex: none; border-top: 1px solid #8d8b8f; border-bottom: 2px solid #8e8e8e; background: linear-gradient(#e3e3e3, #cecece 28px, #cbcbcb 54px, #b5b5b5); }
.titlebar { display: flex; align-items: center; height: 25px; padding: 0 5px; }
.titlebar h1 { flex: 1; padding-left: 12px; text-align: center; font: bold 12px/18px "Open Sans", "Noto Sans", sans-serif; color: #646464; text-shadow: 0 1px #f2f2f2; }
.i10 { width: 10px; height: 10px; }
.wincontrols { display: flex; gap: 12px; }
.wincontrols svg { width: 10px; height: 10px; }
.menubar { display: flex; gap: 19px; height: 20px; padding-left: 12px; }
.toolbar { display: flex; align-items: center; height: 42px; padding-top: 3px; }
.grip { flex: none; display: flex; justify-content: center; width: 13px; height: 8px; }
.grip::before { content: ""; width: 4px; height: 8px; background: repeating-linear-gradient(#8b8b8b 0 1px, transparent 1px 3px); }
.grip.first { width: 11px; }
.grip.wide { width: 46px; height: 11px; align-items: center; }
.grip.wide::before { width: 8px; height: 4px; background: repeating-linear-gradient(90deg, #8b8b8b 0 1px, transparent 1px 3px); }
.tool { flex: none; width: 36px; height: 36px; }
.tool svg { width: 24px; height: 24px; }
.tool.pressed { height: 34px; width: 34px; margin: 0 1px; border: 1px solid #828282; border-radius: 3px; background: linear-gradient(#a9a9a9, #bbb); }
.drop { flex: none; width: 20px; height: 36px; }
.drop svg { width: 10px; height: 10px; }
.faded { opacity: .45; }

.work { flex: 1; display: flex; min-height: 0; }
.sidebar { display: flex; flex-direction: column; align-items: center; width: 46px; flex: none; }
.pair { display: flex; align-self: stretch; }
.pair .tool { width: 38px; }
.pair .drop { width: 10px; margin-left: -8px; }
.more { margin: auto 0 2px; padding-right: 6px; }
.more svg { width: 12px; height: 10px; }
.layers { display: flex; flex-direction: column; width: 294px; flex: none; }
.panelhead { display: flex; align-items: center; gap: 5px; height: 24px; padding: 0 3px 2px 2px; }
.panelhead h2 { flex: 1; font-weight: normal; }
.panelhead svg { width: 12px; height: 12px; }
.tree { flex: 1; list-style: none; background: #fdfdfd; border: 1px solid #868686; border-width: 1px 0 0 1px; }
.row { display: flex; align-items: center; height: 21px; padding-left: 8px; }
.row button svg { width: 10px; height: 10px; }
.row input { margin: 0 7px; }
.row label { flex: 1; padding-left: 2px; font-weight: bold; line-height: 19px; color: #000; white-space: nowrap; }
.row .current { font-weight: normal; border: 1px dotted #777; margin-right: 1px; margin-left: -1px; }
.kind { width: 16px; height: 17px; margin-right: 4px; }
.symbol { height: 17px; padding: 1px 0 0 43px; }
.symbol span { display: block; width: 16px; height: 16px; border: 1px solid #777; background: #fff; }
input[type=checkbox] { appearance: none; flex: none; width: 16px; height: 16px; background: center / 16px url("data:image/svg+xml,%3Csvg xmlns='http://www.w3.org/2000/svg' viewBox='0 0 16 16'%3E%3Crect x='1.500' y='2.500' width='12' height='12' rx='2.500' fill='%23fff' stroke='%23999'/%3E%3C/svg%3E"); }
input[type=checkbox]:checked { background-image: url("data:image/svg+xml,%3Csvg xmlns='http://www.w3.org/2000/svg' viewBox='0 0 16 16'%3E%3Crect x='1.500' y='2.500' width='12' height='12' rx='2.500' fill='%23b4cce2' stroke='%235f7d9c'/%3E%3Cpath d='M4 8L7 11.500L15 3' fill='none' stroke='%23111' stroke-width='2.500'/%3E%3C/svg%3E"); }
.splitter { flex: none; width: 7px; border-right: 1px solid #868686; background: repeating-conic-gradient(#e6e6e6 0 25%, #c0c0c0 0 50%) 0 0 / 4px 4px; }
.map { flex: 1; min-width: 0; background: #fff; }
.map svg { width: 100%; height: 100%; }

.status { flex: none; display: flex; align-items: center; height: 30px; padding: 0 1px 2px 6px; border-top: 1px solid #c0c0c0; background: #cdcdcd; }
.message { flex: 1; }
.mini svg { width: 20px; height: 20px; }
.coordlabel { margin: 0 11px 0 10px; }
.status input[type=text] { width: 298px; height: 18px; padding: 0; border: 1px solid #8e8e8e; border-radius: 3px; background: #fdfdfd; color: #111; text-align: center; }
.scalelabel { margin: 0 13px 0 10px; }
.status select { appearance: none; width: 98px; height: 18px; padding: 0 4px; border: 1px solid #8e8e8e; border-radius: 3px; color: #111; line-height: 16px; background: url("data:image/svg+xml,%3Csvg xmlns='http://www.w3.org/2000/svg' viewBox='0 0 22 16'%3E%3Cpath d='M0 0H22V16H0Z' fill='%23c9c9c9'/%3E%3Cpath d='M.5 0V16' stroke='%23999'/%3E%3Cpath d='M7 6H15L11 11Z' fill='%23444'/%3E%3C/svg%3E") right / 22px 16px no-repeat #fdfdfd; }
.stop { margin: 0 8px; }
.renderlabel { margin: 0 18px 0 5px; }
.epsg { margin-right: 10px; }

.taskbar { flex: none; display: flex; align-items: center; height: 39px; border-top: 1px solid #555; background: #484848; color: #dcdcdc; }
.start { width: 38px; height: 38px; background: #383838; }
.start svg { width: 38px; height: 38px; }
.launchers { display: flex; gap: 2px; margin-left: 17px; }
.launchers svg { width: 36px; height: 36px; }
.qgis { margin: 0 12px; }
.qgis svg { width: 32px; height: 34px; }
.desk { width: 48px; height: 36px; background: #343434; margin-right: 1px; }
.desk.on { background: #a8bfd8; border: 1px solid #eee; }
.desk svg { width: 28px; height: 30px; }
.task { justify-content: flex-start; gap: 7px; height: 38px; padding: 0 2px; white-space: nowrap; }
.task svg { width: 15px; height: 16px; }
.task.active { width: 200px; margin-left: 8px; background: linear-gradient(#2e2e2e, #393939); }
.tray { display: flex; align-items: center; margin-left: auto; padding-right: 10px; white-space: nowrap; }
.tray b { margin-right: 20px; font-size: 16px; }
.batt { width: 12px; height: 20px; margin-right: 9px; }
.mail { width: 18px; height: 13px; margin-right: 6px; }
.vol { width: 20px; height: 16px; margin-right: 11px; }
```
